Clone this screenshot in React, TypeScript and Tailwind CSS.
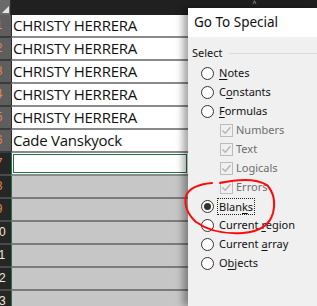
import React from 'react'

type Row = {
  n: number
  text?: string
  kind: 'data' | 'active' | 'blank'
}

const rows: Row[] = [
  { n: 1, text: 'CHRISTY HERRERA', kind: 'data' },
  { n: 2, text: 'CHRISTY HERRERA', kind: 'data' },
  { n: 3, text: 'CHRISTY HERRERA', kind: 'data' },
  { n: 4, text: 'CHRISTY HERRERA', kind: 'data' },
  { n: 5, text: 'CHRISTY HERRERA', kind: 'data' },
  { n: 6, text: 'Cade Vanskyock', kind: 'data' },
  { n: 7, kind: 'active' },
  { n: 8, kind: 'blank' },
  { n: 9, kind: 'blank' },
  { n: 10, kind: 'blank' },
  { n: 11, kind: 'blank' },
  { n: 12, kind: 'blank' },
  { n: 13, kind: 'blank' },
]

// label with one underlined mnemonic letter
function Label({ text, u }: { text: string; u: number }) {
  return (
    <span>
      {text.slice(0, u)}
      <span className="underline underline-offset-2">{text[u]}</span>
      {text.slice(u + 1)}
    </span>
  )
}

function Radio({ checked = false }: { checked?: boolean }) {
  return (
    <span className="w-[13px] h-[13px] rounded-full border border-[#333] bg-white flex items-center justify-center shrink-0">
      {checked && <span className="w-[7px] h-[7px] rounded-full bg-[#333]" />}
    </span>
  )
}

function Check() {
  return (
    <span className="w-[13px] h-[13px] border border-[#bcbcbc] bg-[#f0f0f0] flex items-center justify-center shrink-0">
      <svg width="11" height="11" viewBox="0 0 11 11">
        <path d="M1.5 5.5 L4.2 8.3 L9.5 2.2" fill="none" stroke="#b4b4b4" strokeWidth="1.4" />
      </svg>
    </span>
  )
}

export default function App() {
  return (
    <div className="relative w-[317px] h-[306px] overflow-hidden flex bg-[#1f1f1f] font-['Noto_Sans',sans-serif]">
      {/* 🔹 SHEET */}
      <div className="w-[188px] shrink-0 flex flex-col">
        <div className="h-[15px] flex">
          <div className="w-[11px] h-[15px] bg-[#6a6a6a] border-r border-[#2b2b2b] relative overflow-hidden">
            <svg width="11" height="15" className="block">
              <path d="M9 6 L9 13 L2 13 Z" fill="#e6e6e6" />
            </svg>
          </div>
          <div className="flex-1 bg-[#202020]" />
        </div>
        <div className="h-[1px] flex">
          <div className="w-[11px] bg-[#2b2b2b]" />
          <div className="flex-1 bg-[#217346]" />
        </div>

        {rows.map((r) => (
          <div key={r.n} className="h-[23px] flex shrink-0">
            <div
              className={
                'w-[11px] h-[23px] overflow-hidden border-b-2 ' +
                (r.kind === 'data' ? 'bg-[#5e5e5e] border-[#3a3a3a]' : 'bg-[#262626] border-[#4a4a4a]')
              }
            >
              <div
                className={
                  'w-[26px] -ml-[14px] text-center text-[12px] leading-[21px] font-["Liberation_Sans",sans-serif] ' +
                  (r.n < 10 ? 'text-[#e0874a]' : 'text-[#f1e6dc]')
                }
              >
                {r.n}
              </div>
            </div>
            <div
              className={
                'flex-1 border-l border-b-2 ' +
                (r.kind === 'data'
                  ? 'bg-white border-l-[#2b2b2b] border-b-[#8a8a8a]'
                  : r.kind === 'active'
                    ? 'bg-white border-l-[#217346] border-b-[#8a8a8a] p-[1px]'
                    : 'bg-[#c6c6c6] border-l-[#217346] border-b-[#7b7b7b]')
              }
            >
              {r.kind === 'active' ? (
                <div className="h-full border border-[#217346]" />
              ) : (
                <div className="pl-[1px] text-[15px] leading-[21px] text-[#111] font-['Open_Sans',sans-serif] tracking-[-0.25px] whitespace-nowrap">
                  {r.text}
                </div>
              )}
            </div>
          </div>
        ))}
      </div>

      {/* 🔹 DIALOG */}
      <div className="flex-1 flex flex-col relative z-10">
        <div className="h-[8px] bg-[#1f1f1f] flex justify-center">
          <span className="ml-[4px] text-[7px] leading-[8px] text-[#bdbdbd]">^</span>
        </div>
        <div className="flex-1 flex flex-col shadow-[-5px_0_7px_rgba(0,0,0,0.35)]">
          <div className="h-[29px] bg-white pl-[6px] text-[13.5px] leading-[29px] text-[#111]">Go To Special</div>
          <div className="flex-1 bg-[#f0f0f0] text-[11px] text-[#111] pl-[4px]">
            <div className="flex items-center gap-[6px] h-[14px] mt-[9px]">
              <span>Select</span>
              <span className="flex-1 h-[1px] bg-[#dadada]" />
            </div>

            <div className="pl-[9px] mt-[4px] flex flex-col">
              {[
                ['Notes', 0],
                ['Constants', 1],
                ['Formulas', 0],
              ].map(([t, u]) => (
                <div key={t as string} className="h-[19px] flex items-center gap-[5px]">
                  <Radio />
                  <Label text={t as string} u={u as number} />
                </div>
              ))}

              {['Numbers', 'Text', 'Logicals', 'Errors'].map((t) => (
                <div key={t} className="h-[19px] flex items-center gap-[3px] pl-[19px] text-[#6d6d6d]">
                  <Check />
                  <span>{t}</span>
                </div>
              ))}

              <div className="h-[19px] flex items-center gap-[3px]">
                <Radio checked />
                <span className="border border-dotted border-[#222] px-[1px] leading-[15px]">
                  <Label text="Blanks" u={4} />
                </span>
              </div>

              {[
                ['Current region', 8],
                ['Current array', 8],
                ['Objects', 1],
              ].map(([t, u]) => (
                <div key={t as string} className="h-[19px] flex items-center gap-[5px]">
                  <Radio />
                  <Label text={t as string} u={u as number} />
                </div>
              ))}
            </div>
          </div>
        </div>
      </div>

      {/* red hand-drawn circle */}
      <svg className="absolute left-0 top-0 z-20 pointer-events-none" width="317" height="306">
        <path
          d="M220 183 Q252 176 267 185 Q277 196 273 213 Q268 231 243 233 Q214 235 196 222 Q183 210 186 196 Q190 185 212 183"
          fill="none"
          stroke="#ff0a0a"
          strokeWidth="2"
          strokeLinecap="round"
        />
      </svg>
    </div>
  )
}
